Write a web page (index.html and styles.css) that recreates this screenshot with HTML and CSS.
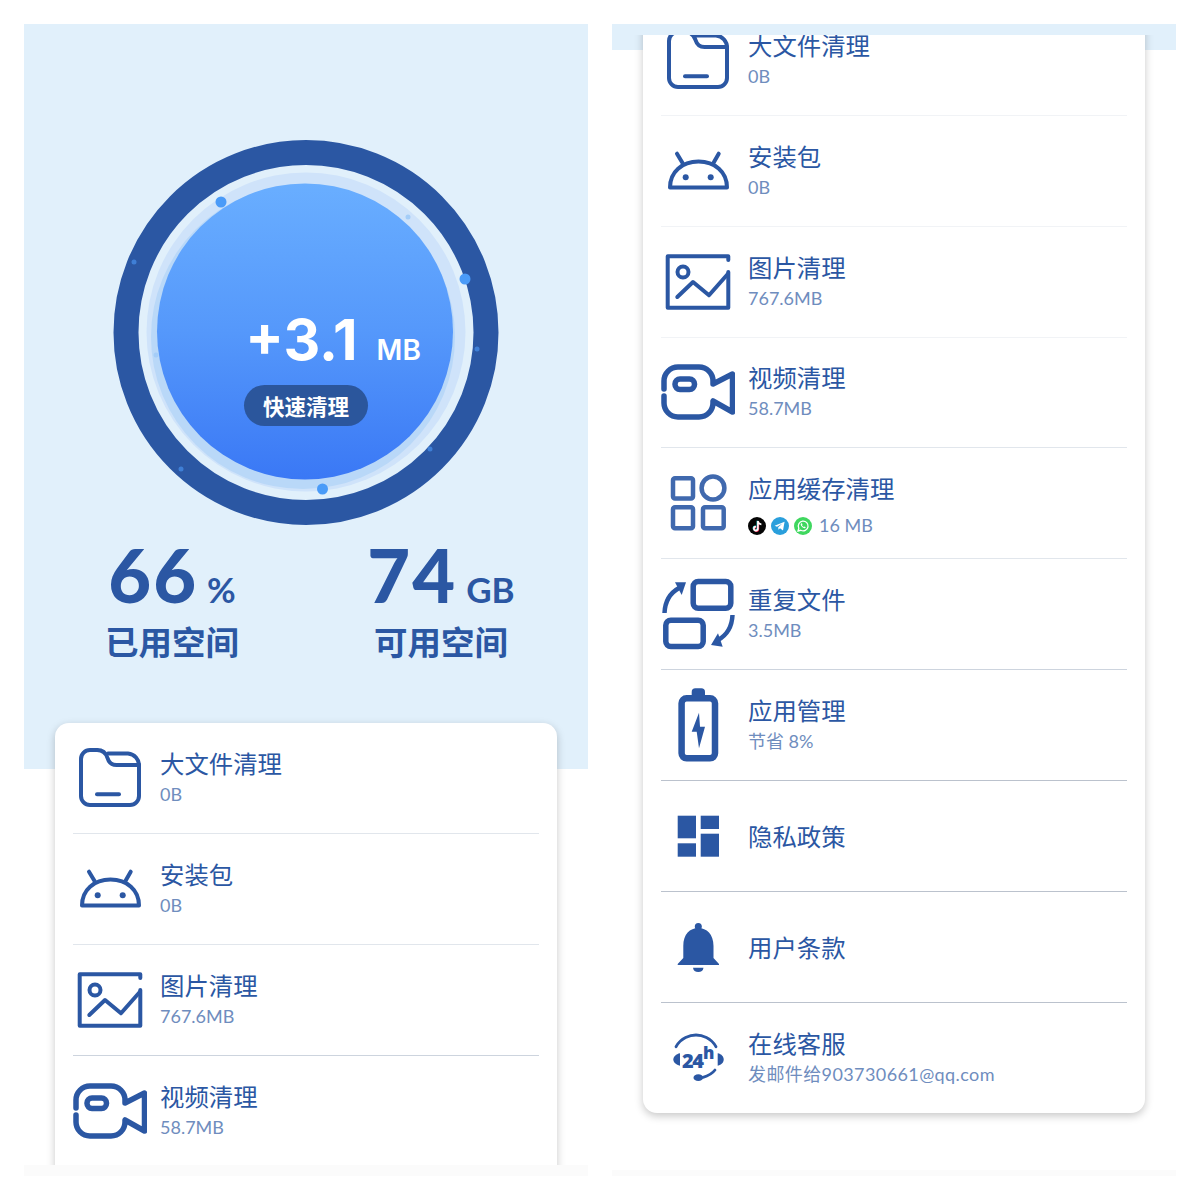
FILE: index.html
```html
<!DOCTYPE html>
<html lang="zh-CN">
<head>
  <meta charset="UTF-8">
  <meta name="viewport" content="width=device-width, initial-scale=1.0">
  <title>快速清理</title>
  <link rel="stylesheet" href="styles.css">
</head>
<body>
  <!-- 列表图标 -->
  <svg class="icon-defs">
    <symbol id="i-folder" viewBox="0 0 74 74">
      <path class="line" d="M24 9H17a9 9 0 0 0-9 9V55a9 9 0 0 0 9 9H57a9 9 0 0 0 9-9V25a12 12 0 0 0-11-12.500H35"/>
      <path class="line" d="M24 9c6 0 9 3 10.500 8 1.500 5 4 7 9 7H66"/>
      <path class="line" d="M24 53.300H46"/>
    </symbol>
    <symbol id="i-android" viewBox="0 0 74 74">
      <path class="line" d="M9 53.500C9 38 21 27.500 37.500 27.500S66 38 66 53.500Z"/>
      <path class="line" d="M16 19.700L22 29.700M57.700 19.700L52 29.700"/>
      <circle class="solid" cx="24.700" cy="43.300" r="3"/>
      <circle class="solid" cx="49.700" cy="43.300" r="3"/>
    </symbol>
    <symbol id="i-image" viewBox="0 0 74 74">
      <path class="line" d="M67.300 27V62.700H6.700V11.300H67.300V15"/>
      <path class="line" d="M16.300 52L32 37L48 50.300L67 28.700"/>
      <circle class="line" cx="22" cy="27" r="5.500"/>
    </symbol>
    <symbol id="i-video" viewBox="0 0 74 74">
      <path class="line thick" d="M3 34V26a14 14 0 0 1 14-14H38a14 14 0 0 1 14 14V29L71.500 19V57L52 46V48a14 14 0 0 1-14 14H17a14 14 0 0 1-14-14V41"/>
      <rect class="line thick" x="14" y="24" width="19.500" height="10.500" rx="5"/>
    </symbol>
    <symbol id="i-apps" viewBox="0 0 74 74">
      <rect class="line lighter" x="12" y="12.300" width="20" height="20.200" rx="2"/>
      <circle class="line lighter" cx="52" cy="22" r="11.400"/>
      <rect class="line lighter" x="12" y="41.300" width="20" height="21" rx="2"/>
      <rect class="line lighter" x="42" y="41.300" width="20.700" height="21" rx="2"/>
    </symbol>
    <symbol id="i-repeat" viewBox="0 0 74 74">
      <rect class="line thick" x="32.200" y="4.500" width="37.600" height="26.700" rx="5"/>
      <rect class="line thick" x="4.800" y="43.200" width="37.400" height="26.300" rx="5"/>
      <path class="line flat" d="M3.500 36C4 24 9 16 18 11"/>
      <path class="line flat" d="M71.500 38C71 50 66 58 57 63"/>
      <path class="solid" d="M25 5.300L14 5.300L20.700 18Z"/>
      <path class="solid" d="M50 68L57 56.300L61.700 69.700Z"/>
    </symbol>
    <symbol id="i-battery" viewBox="0 0 74 74">
      <path class="solid" d="M30.700 8V4a3.700 3.700 0 0 1 3.700-3.700H40.300A3.700 3.700 0 0 1 44 4V8Z"/>
      <rect class="line heavy" x="20.600" y="10.300" width="33.400" height="60" rx="5"/>
      <path class="solid" d="M38 24.700L30.700 43.700H35.700L38 60.300L44 38.700H39Z"/>
    </symbol>
    <symbol id="i-layout" viewBox="0 0 74 74">
      <rect class="solid" x="16.700" y="16.700" width="18.300" height="22.600"/>
      <rect class="solid" x="16.700" y="44.300" width="18.300" height="13.400"/>
      <rect class="solid" x="39.700" y="16.700" width="18.300" height="13.300"/>
      <rect class="solid" x="39.700" y="34.700" width="18.300" height="23"/>
    </symbol>
    <symbol id="i-bell" viewBox="0 0 74 74">
      <circle class="solid" cx="37.300" cy="16.500" r="3.500"/>
      <path class="solid" d="M16.700 55V54L22.300 48V36C22.300 24 29 18 37.300 18S52.500 24 52.500 36V48L58 54V55Z"/>
      <path class="solid" d="M32 57.700H42.500a5.300 5 0 0 1-10.500 0Z"/>
    </symbol>
    <symbol id="i-service" viewBox="0 0 74 74">
      <path class="line slim" d="M15 25.700C20 17 29 14 35 14S50 17 55 25.700"/>
      <path class="solid" d="M19 32.300V44.700C15 44 12.300 41 12.300 38.500S15 33 19 32.300Z"/>
      <path class="solid" d="M56.700 32.300V44.700C60.700 44 62.700 41 62.700 38.500S60.700 33 56.700 32.300Z"/>
      <text class="icon-num" x="21" y="47">24</text>
      <text class="icon-hour" x="42" y="38">h</text>
      <path class="line slim" d="M54 49C51 53 47 55 42 56.300"/>
      <ellipse class="solid" cx="37.300" cy="56.700" rx="4.800" ry="3.400"/>
    </symbol>
  </svg>

  <main class="board">
    <section class="screen">
      <div class="viewport">
        <header class="hero">
          <div class="dial">
            <svg class="dial-art" viewBox="0 0 386 386">
              <defs>
                <linearGradient id="ballFill" x1="0" y1="0" x2="0" y2="1">
                  <stop offset="0" stop-color="#69aeff"/>
                  <stop offset="0.5" stop-color="#5598fb"/>
                  <stop offset="1" stop-color="#3a78f5"/>
                </linearGradient>
              </defs>
              <circle cx="193" cy="192.500" r="180" fill="none" stroke="#2b57a3" stroke-width="25"/>
              <circle cx="193" cy="192" r="159.500" fill="#cfe3fa"/>
              <circle cx="190" cy="197" r="152" fill="#b9d8f8"/>
              <circle cx="192" cy="191.500" r="148" fill="url(#ballFill)"/>
              <circle cx="108" cy="62" r="5.500" fill="#4a9bf8"/>
              <circle cx="352" cy="139" r="5.500" fill="#4a9bf8"/>
              <circle cx="209.500" cy="349" r="5.500" fill="#4a9bf8"/>
              <circle cx="295" cy="77" r="2.500" fill="#a4cdf8"/>
              <circle cx="21" cy="122" r="2.500" fill="#3f7fd6"/>
              <circle cx="364" cy="209" r="2.500" fill="#3f7fd6"/>
              <circle cx="43" cy="215" r="2.500" fill="#a4cdf8"/>
              <circle cx="68" cy="329" r="2.500" fill="#3f7fd6"/>
              <circle cx="317" cy="309" r="2.500" fill="#3f7fd6"/>
            </svg>
            <div class="dial-text">
              <div class="gain">+3.1<span class="gain-unit">MB</span></div>
              <div class="clean-pill">快速清理</div>
            </div>
          </div>

          <div class="stats">
            <div class="stat">
              <div class="stat-num">66<span class="stat-unit">%</span></div>
              <div class="stat-label">已用空间</div>
            </div>
            <div class="stat">
              <div class="stat-num">74<span class="stat-unit">GB</span></div>
              <div class="stat-label">可用空间</div>
            </div>
          </div>
        </header>

        <div class="list-clip list-clip-hero">
          <ul class="card card-open">
            <li class="row line-b">
              <svg class="row-icon"><use href="#i-folder"/></svg>
              <div class="row-text"><div class="row-title">大文件清理</div><div class="row-sub">0B</div></div>
            </li>
            <li class="row line-b">
              <svg class="row-icon"><use href="#i-android"/></svg>
              <div class="row-text"><div class="row-title">安装包</div><div class="row-sub">0B</div></div>
            </li>
            <li class="row line-c">
              <svg class="row-icon"><use href="#i-image"/></svg>
              <div class="row-text"><div class="row-title">图片清理</div><div class="row-sub">767.6MB</div></div>
            </li>
            <li class="row">
              <svg class="row-icon"><use href="#i-video"/></svg>
              <div class="row-text"><div class="row-title">视频清理</div><div class="row-sub">58.7MB</div></div>
            </li>
          </ul>
        </div>
      </div>
      <div class="foot foot-tall"></div>
    </section>

    <section class="screen">
      <div class="viewport">
        <div class="band"></div>
        <div class="list-clip list-clip-band">
          <ul class="card card-scrolled">
            <li class="row line-a">
              <svg class="row-icon"><use href="#i-folder"/></svg>
              <div class="row-text"><div class="row-title">大文件清理</div><div class="row-sub">0B</div></div>
            </li>
            <li class="row line-a">
              <svg class="row-icon"><use href="#i-android"/></svg>
              <div class="row-text"><div class="row-title">安装包</div><div class="row-sub">0B</div></div>
            </li>
            <li class="row line-a">
              <svg class="row-icon"><use href="#i-image"/></svg>
              <div class="row-text"><div class="row-title">图片清理</div><div class="row-sub">767.6MB</div></div>
            </li>
            <li class="row line-b">
              <svg class="row-icon"><use href="#i-video"/></svg>
              <div class="row-text"><div class="row-title">视频清理</div><div class="row-sub">58.7MB</div></div>
            </li>
            <li class="row line-b">
              <svg class="row-icon"><use href="#i-apps"/></svg>
              <div class="row-text">
                <div class="row-title">应用缓存清理</div>
                <div class="row-sub row-sub-apps">
                  <svg class="app-badge" viewBox="0 0 18 18">
                    <circle cx="9" cy="9" r="9" fill="#050505"/>
                    <path d="M9.500 3.800V11.300a2 2 0 1 1-2-2" fill="none" stroke="#25f4ee" stroke-width="1.800"/>
                    <path d="M10.300 4.500V12a2 2 0 1 1-2-2" fill="none" stroke="#fe2c55" stroke-width="1.800"/>
                    <path d="M9.900 4.100V11.600a2 2 0 1 1-2-2M9.900 4.100C10.200 6 11.400 7.200 13.400 7.400" fill="none" stroke="#fff" stroke-width="1.600"/>
                  </svg>
                  <svg class="app-badge" viewBox="0 0 18 18">
                    <circle cx="9" cy="9" r="9" fill="#2a9fdc"/>
                    <path d="M3.600 8.800L13.600 4.800L12 13.400L9 11.300L7.500 12.700L7.200 10.200L11.400 6.600L6 9.800Z" fill="#fff"/>
                  </svg>
                  <svg class="app-badge" viewBox="0 0 18 18">
                    <circle cx="9" cy="9" r="9" fill="#3fd75f"/>
                    <path d="M4 14L4.800 11.200A4.900 4.900 0 1 1 6.800 13.300Z" fill="none" stroke="#fff" stroke-width="1.300"/>
                    <path d="M7.200 6.400C6.400 7 6.600 8.200 7.800 9.600S10.400 11.600 11.200 11C11.800 10.500 11.700 10 11.500 9.900L10.500 9.400L9.900 10C9.200 9.800 8.300 8.900 8 8.200L8.500 7.600L8 6.500C7.800 6.200 7.500 6.200 7.200 6.400Z" fill="#fff"/>
                  </svg>
                  <span class="app-size">16 MB</span>
                </div>
              </div>
            </li>
            <li class="row line-c">
              <svg class="row-icon"><use href="#i-repeat"/></svg>
              <div class="row-text"><div class="row-title">重复文件</div><div class="row-sub">3.5MB</div></div>
            </li>
            <li class="row line-d">
              <svg class="row-icon"><use href="#i-battery"/></svg>
              <div class="row-text"><div class="row-title">应用管理</div><div class="row-sub">节省 8%</div></div>
            </li>
            <li class="row line-d">
              <svg class="row-icon"><use href="#i-layout"/></svg>
              <div class="row-text"><div class="row-title">隐私政策</div></div>
            </li>
            <li class="row line-d">
              <svg class="row-icon"><use href="#i-bell"/></svg>
              <div class="row-text"><div class="row-title">用户条款</div></div>
            </li>
            <li class="row">
              <svg class="row-icon"><use href="#i-service"/></svg>
              <div class="row-text"><div class="row-title">在线客服</div><div class="row-sub row-sub-mail">发邮件给903730661@qq.com</div></div>
            </li>
          </ul>
        </div>
      </div>
      <div class="foot"></div>
    </section>
  </main>
</body>
</html>
```

FILE: styles.css
```css
:root {
  --blue: #2b57a3;
  --sub: #6f8dbe;
  --sky: #e1f0fb;
}
* {
  box-sizing: border-box;
}
body {
  margin: 0;
  background: #fff;
  font-family: "Noto Sans CJK SC", "Noto Sans", sans-serif;
  color: var(--blue);
}
ul {
  margin: 0;
  padding: 0;
  list-style: none;
}
.icon-defs {
  display: none;
}
.board {
  display: grid;
  grid-template-columns: 564px 564px;
  gap: 24px;
  padding: 24px;
}
.screen {
  display: flex;
  flex-direction: column;
  height: 1152px;
}
.viewport {
  flex: 1;
  min-height: 0;
  overflow: hidden;
}
.foot {
  height: 6px;
  background: #fbfbfb;
}
.foot-tall {
  height: 11px;
}

/* 顶部仪表盘 */
.hero {
  height: 745px;
  padding-top: 116px;
  background: var(--sky);
}
.dial {
  position: relative;
  width: 386px;
  height: 386px;
  margin: 0 auto;
}
.dial-art {
  display: block;
  width: 386px;
  height: 386px;
}
.dial-text {
  position: absolute;
  inset: 0;
  display: flex;
  flex-direction: column;
  align-items: center;
  padding-top: 172px;
  color: #fff;
}
.gain {
  margin-left: 54px;
  font-family: Inter, "Noto Sans", sans-serif;
  font-size: 57px;
  font-weight: 700;
  line-height: 56px;
  white-space: nowrap;
}
.gain-unit {
  margin-left: 19px;
  font-size: 28px;
  font-weight: 600;
}
.clean-pill {
  width: 124px;
  height: 41px;
  margin-top: 7px;
  border-radius: 21px;
  background: #2b569c;
  font-size: 21.500px;
  font-weight: 700;
  line-height: 41px;
  text-align: center;
}
.stats {
  display: flex;
  justify-content: space-between;
  padding: 0 80px 0 81px;
}
.stat {
  width: 134px;
}
.stat-num {
  display: flex;
  justify-content: center;
  align-items: baseline;
  margin-top: 11px;
  font-family: Lato, sans-serif;
  font-size: 74px;
  font-weight: 900;
  line-height: 76px;
  letter-spacing: 2px;
  white-space: nowrap;
}
.stat-unit {
  margin-left: 9px;
  font-size: 35px;
  font-weight: 700;
  letter-spacing: 0;
}
.stat-label {
  margin-top: -6px;
  font-size: 33.500px;
  font-weight: 700;
  line-height: 40px;
  text-align: center;
  white-space: nowrap;
}

/* 列表卡片 */
.list-clip {
  position: relative;
  height: 100%;
  padding: 10px 31px 0;
  overflow: hidden;
}
.list-clip-hero {
  margin-top: -56px;
}
.list-clip-band {
  margin-top: -15px;
  padding-top: 0;
}
.band {
  height: 26px;
  background: var(--sky);
}
.card {
  background: #fff;
  border-radius: 14px;
  box-shadow: 0 3px 8px rgba(0, 0, 0, 0.22);
  padding: 0 18px;
}
.card-open {
  padding-bottom: 80px;
}
.card-scrolled {
  margin-top: -30px;
}
.row {
  display: flex;
  align-items: center;
  gap: 13px;
  height: 110.850px;
  border-bottom: 1px solid transparent;
}
.row:last-child {
  border-bottom: 0;
}
.line-a {
  border-bottom-color: #f1f3f6;
}
.line-b {
  border-bottom-color: #e1e6ec;
}
.line-c {
  border-bottom-color: #cdd4de;
}
.line-d {
  border-bottom-color: #bbc2cd;
}
.row-icon {
  flex: none;
  width: 74px;
  height: 74px;
  overflow: visible;
}
.row-title {
  font-size: 24.400px;
  line-height: 30px;
}
.row-sub {
  margin-top: 3px;
  font-family: Lato, "Noto Sans CJK SC", sans-serif;
  font-size: 18px;
  font-weight: 400;
  line-height: 27px;
  color: var(--sub);
  white-space: nowrap;
}
.row-sub-mail {
  letter-spacing: 0.400px;
}
.row-sub-apps {
  display: flex;
  align-items: center;
  gap: 5px;
  margin-top: 9px;
  margin-bottom: -6px;
}
.app-badge {
  width: 18px;
  height: 18px;
}
.app-size {
  margin-left: 2px;
}

/* 图标线条 */
.line {
  fill: none;
  stroke: var(--blue);
  stroke-width: 4;
  stroke-linecap: round;
  stroke-linejoin: round;
}
.thick {
  stroke-width: 5.500;
}
.lighter {
  stroke: #4069ae;
  stroke-width: 4.500;
}
.flat {
  stroke-width: 4.500;
  stroke-linecap: butt;
}
.heavy {
  stroke-width: 6.500;
}
.slim {
  stroke-width: 2.800;
}
.solid {
  fill: var(--blue);
}
.icon-num {
  font-family: "Open Sans", sans-serif;
  font-size: 20px;
  font-weight: 800;
  fill: var(--blue);
  letter-spacing: -1.500px;
}
.icon-hour {
  font-family: "Open Sans", sans-serif;
  font-size: 17px;
  font-weight: 800;
  fill: var(--blue);
}
```
